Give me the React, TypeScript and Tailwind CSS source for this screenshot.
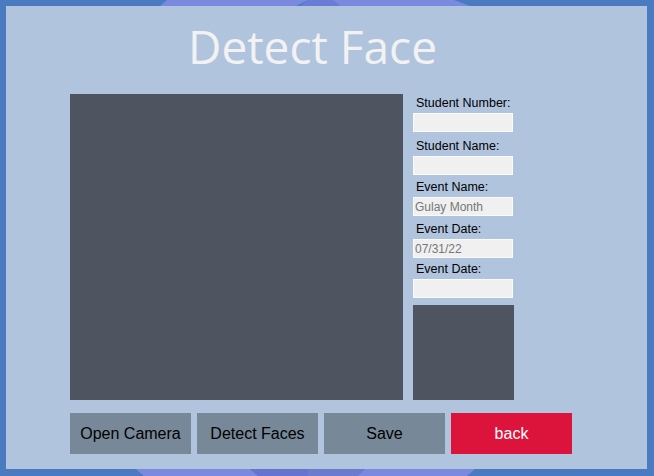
export default function App() {
  const fields = [
    { label: "Student Number:", value: "", h: "h-[19px]" },
    { label: "Student Name:", value: "", h: "h-[24px]" },
    { label: "Event Name:", value: "Gulay Month", h: "h-[22px]" },
    { label: "Event Date:", value: "07/31/22", h: "h-[23px]" },
    { label: "Event Date:", value: "", h: "h-[21px]" },
  ];

  return (
    <div className="relative w-[654px] h-[476px] overflow-hidden bg-[#4a7bc0]">
      {/* window backdrop */}
      <svg className="absolute inset-0" width="654" height="476" viewBox="0 0 654 476">
        <polygon points="167,0 308,0 296,6 160,6" fill="#7a8ade" />
        <polygon points="308,0 333,0 340,6 300,6" fill="#6a7cd8" />
        <polygon points="333,0 454,0 470,6 340,6" fill="#7a8ade" />
        <polygon points="144,476 258,476 250,469 136,469" fill="#7a8ade" />
        <polygon points="258,476 308,476 308,469 250,469" fill="#6474cf" />
        <polygon points="308,476 358,476 365,469 308,469" fill="#6c7ccc" />
        <polygon points="358,476 467,476 475,469 365,469" fill="#7a8ade" />
      </svg>

      <div className="absolute left-[6px] top-[6px] w-[641px] h-[463px] bg-[#b0c4de]">
        <div
          className="h-[88px] pt-[8px] pr-[28px] text-center text-[46px] leading-[64px] text-[#f2f2f2]"
          style={{ fontFamily: '"Open Sans", sans-serif' }}
        >
          Detect Face
        </div>

        <div className="flex pl-[64px]">
          <div className="w-[333px] h-[306px] bg-[#4e5561]" />
          <div
            className="ml-[10px] w-[101px] flex flex-col text-[12.5px] text-black"
            style={{ fontFamily: '"Liberation Sans", Arial, sans-serif' }}
          >
            {fields.map((f, i) => (
              <div key={i} className="flex flex-col">
                <div className={`${f.h} flex items-end pl-[3px] pb-[3px] leading-[14px] whitespace-nowrap`}>{f.label}</div>
                <div className="h-[19px] w-[100px] bg-[#f0f0f0] border border-[#fbfbfb] flex items-center px-[1px] text-[12px] text-[#777777]">
                  {f.value}
                </div>
              </div>
            ))}
            <div className="mt-[7px] w-[101px] h-[95px] bg-[#4e5561]" />
          </div>
        </div>

        <div
          className="flex gap-[6px] pl-[64px] mt-[13px] text-[16px]"
          style={{ fontFamily: '"Liberation Sans", Arial, sans-serif' }}
        >
          <div className="w-[121px] h-[41px] bg-[#778899] flex items-center justify-center text-black">Open Camera</div>
          <div className="w-[121px] h-[41px] bg-[#778899] flex items-center justify-center text-black">Detect Faces</div>
          <div className="w-[121px] h-[41px] bg-[#778899] flex items-center justify-center text-black">Save</div>
          <div className="w-[121px] h-[41px] bg-[#dc143c] flex items-center justify-center text-white">back</div>
        </div>
      </div>
    </div>
  );
}
